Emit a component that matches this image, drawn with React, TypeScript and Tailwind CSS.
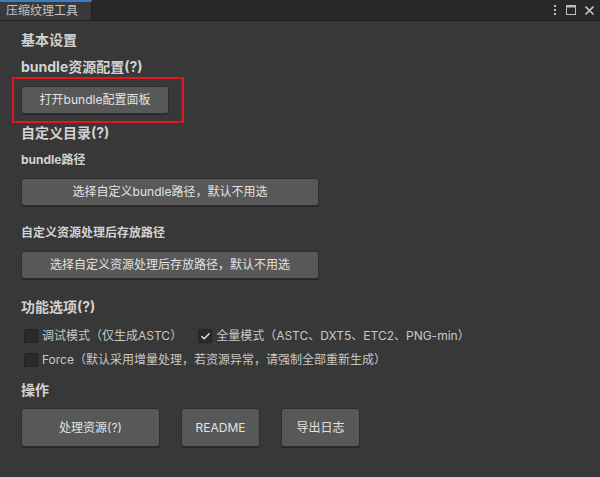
import { Check } from 'lucide-react';

function Btn({ label, className }: { label: string; className: string }) {
  return (
    <button
      className={`flex items-center justify-center rounded-[3px] border border-[#2e2e2e] bg-[#585858] text-[12px] text-[#e2e2e2] shadow-[0_1px_0_#262626] ${className}`}
    >
      {label}
    </button>
  );
}

function Box({ checked }: { checked?: boolean }) {
  return (
    <span className="flex h-[14px] w-[14px] items-center justify-center rounded-[2px] border border-[#222] bg-[#2b2b2b]">
      {checked && <Check className="h-[11px] w-[11px] text-[#e8e8e8]" strokeWidth={3} />}
    </span>
  );
}

export default function App() {
  return (
    <div className="h-[477px] w-[600px] overflow-hidden bg-[#383838] font-['Inter','Noto_Sans_CJK_SC',sans-serif] text-[#d2d2d2]">
      {/* title bar */}
      <div className="flex h-[21px] items-stretch border-b border-[#1f1f1f] bg-[#282828]">
        <div className="flex w-[92px] items-center border-t-2 border-r border-t-[#3b7fc6] border-r-[#1f1f1f] bg-[#3a3a3a] pl-[6px] text-[12px] text-[#c4c4c4]">
          压缩纹理工具
        </div>
        <div className="flex-1" />
        <div className="flex items-center gap-[9px] pr-[6px] text-[#bdbdbd]">
          <svg width="4" height="12" viewBox="0 0 4 12">
            <rect x="1" y="1" width="2" height="2" fill="currentColor" />
            <rect x="1" y="5" width="2" height="2" fill="currentColor" />
            <rect x="1" y="9" width="2" height="2" fill="currentColor" />
          </svg>
          <svg width="10" height="10" viewBox="0 0 10 10">
            <rect x="0.5" y="0.5" width="9" height="9" fill="none" stroke="currentColor" />
            <rect x="0.5" y="0.5" width="9" height="2" fill="currentColor" />
          </svg>
          <svg width="9" height="9" viewBox="0 0 9 9">
            <path d="M0.5 0.5L8.5 8.5M8.5 0.5L0.5 8.5" stroke="currentColor" strokeWidth="1.6" />
          </svg>
        </div>
      </div>

      <div className="flex flex-col pl-[21px]">
        <div className="mt-[9px] h-[20px] text-[14px] font-bold leading-[20px]">基本设置</div>
        <div className="mt-[7px] h-[20px] text-[14px] font-bold leading-[20px]">bundle资源配置(?)</div>
        <div className="-ml-[9px] h-[46px] w-[172px] border-2 border-[#e3161d] pl-[7px] pt-[7px]">
          <Btn label="打开bundle配置面板" className="h-[28px] w-[148px]" />
        </div>
        <div className="h-[20px] text-[14px] font-bold leading-[20px]">自定义目录(?)</div>
        <div className="mt-[7px] h-[20px] text-[12px] font-bold leading-[20px]">bundle路径</div>
        <Btn label="选择自定义bundle路径，默认不用选" className="mt-[8px] h-[28px] w-[298px]" />
        <div className="mt-[17px] h-[20px] text-[12px] font-bold leading-[20px]">自定义资源处理后存放路径</div>
        <Btn label="选择自定义资源处理后存放路径，默认不用选" className="mt-[8px] h-[28px] w-[298px]" />

        <div className="mt-[18px] h-[20px] text-[14px] font-bold leading-[20px]">功能选项(?)</div>
        <div className="mt-[9px] flex h-[20px] items-center text-[12px] text-[#c8c8c8]">
          <div className="ml-[3px] flex items-center gap-[4px]">
            <Box />
            <span>调试模式（仅生成ASTC）</span>
          </div>
          <div className="ml-[16px] flex items-center gap-[4px]">
            <Box checked />
            <span>全量模式（ASTC、DXT5、ETC2、PNG-min）</span>
          </div>
        </div>
        <div className="mt-[4px] flex h-[20px] items-center text-[12px] text-[#c8c8c8]">
          <div className="ml-[3px] flex items-center gap-[4px]">
            <Box />
            <span>Force（默认采用增量处理，若资源异常，请强制全部重新生成）</span>
          </div>
        </div>

        <div className="mt-[10px] h-[20px] text-[14px] font-bold leading-[20px]">操作</div>
        <div className="mt-[8px] flex">
          <Btn label="处理资源(?)" className="h-[39px] w-[139px]" />
          <Btn label="README" className="ml-[21px] h-[39px] w-[79px]" />
          <Btn label="导出日志" className="ml-[21px] h-[39px] w-[79px]" />
        </div>
      </div>
    </div>
  );
}
